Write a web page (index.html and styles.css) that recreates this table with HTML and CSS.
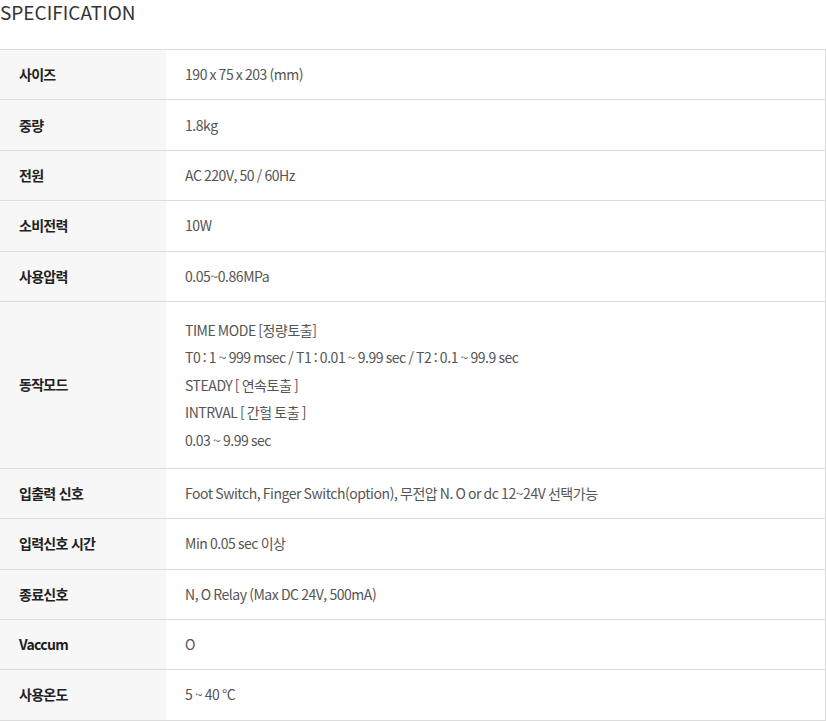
FILE: index.html
```html
<!DOCTYPE html>
<html lang="ko">
<head>
<meta charset="utf-8">
<link rel="stylesheet" href="styles.css">
</head>
<body>
<h2 class="title">SPECIFICATION</h2>
<table class="spec">
<tbody>
<tr><th>사이즈</th><td>190 x 75 x 203 (mm)</td></tr>
<tr><th>중량</th><td>1.8kg</td></tr>
<tr><th>전원</th><td>AC 220V, 50 / 60Hz</td></tr>
<tr><th>소비전력</th><td>10W</td></tr>
<tr><th>사용압력</th><td>0.05~0.86MPa</td></tr>
<tr><th>동작모드</th><td class="multi">TIME MODE [정량토출]<br>T0 : 1 ~ 999 msec / T1 : 0.01 ~ 9.99 sec / T2 : 0.1 ~ 99.9 sec<br>STEADY [ 연속토출 ]<br>INTRVAL [ 간헐 토출 ]<br>0.03 ~ 9.99 sec</td></tr>
<tr><th>입출력 신호</th><td>Foot Switch, Finger Switch(option), 무전압 N. O or dc 12~24V 선택가능</td></tr>
<tr><th>입력신호 시간</th><td>Min 0.05 sec 이상</td></tr>
<tr><th>종료신호</th><td>N, O Relay (Max DC 24V, 500mA)</td></tr>
<tr><th>Vaccum</th><td>O</td></tr>
<tr><th>사용온도</th><td>5 ~ 40 °C</td></tr>
</tbody>
</table>
</body>
</html>
```
FILE: styles.css
```css
html, body {
  margin: 0;
  padding: 0;
  background: #fff;
}
body {
  font-family: "Noto Sans CJK KR", "Noto Sans", sans-serif;
  color: #333;
}
.title {
  margin: 0;
  font-size: 19px;
  font-weight: 400;
  line-height: 24px;
  color: #333;
  letter-spacing: 0;
}
.spec {
  margin-top: 25px;
  width: 826px;
  border-collapse: collapse;
  border-top: 1px solid #dcdcdc;
  border-right: 1px solid #dcdcdc;
  font-size: 14px;
  line-height: 21px;
}
.spec th, .spec td {
  border-bottom: 1px solid #dcdcdc;
  padding: 14.2px 20px;
  text-align: left;
  vertical-align: middle;
}
.spec th {
  width: 127px;
  padding-left: 19px;
  background: #f7f7f7;
  font-weight: 700;
  color: #222;
  letter-spacing: -0.7px;
}
.spec td {
  padding-left: 19px;
  color: #555;
  letter-spacing: -0.45px;
  word-spacing: -0.9px;
}
.spec td.multi {
  padding-top: 15px;
  padding-bottom: 13.4px;
  line-height: 27.5px;
}
```
